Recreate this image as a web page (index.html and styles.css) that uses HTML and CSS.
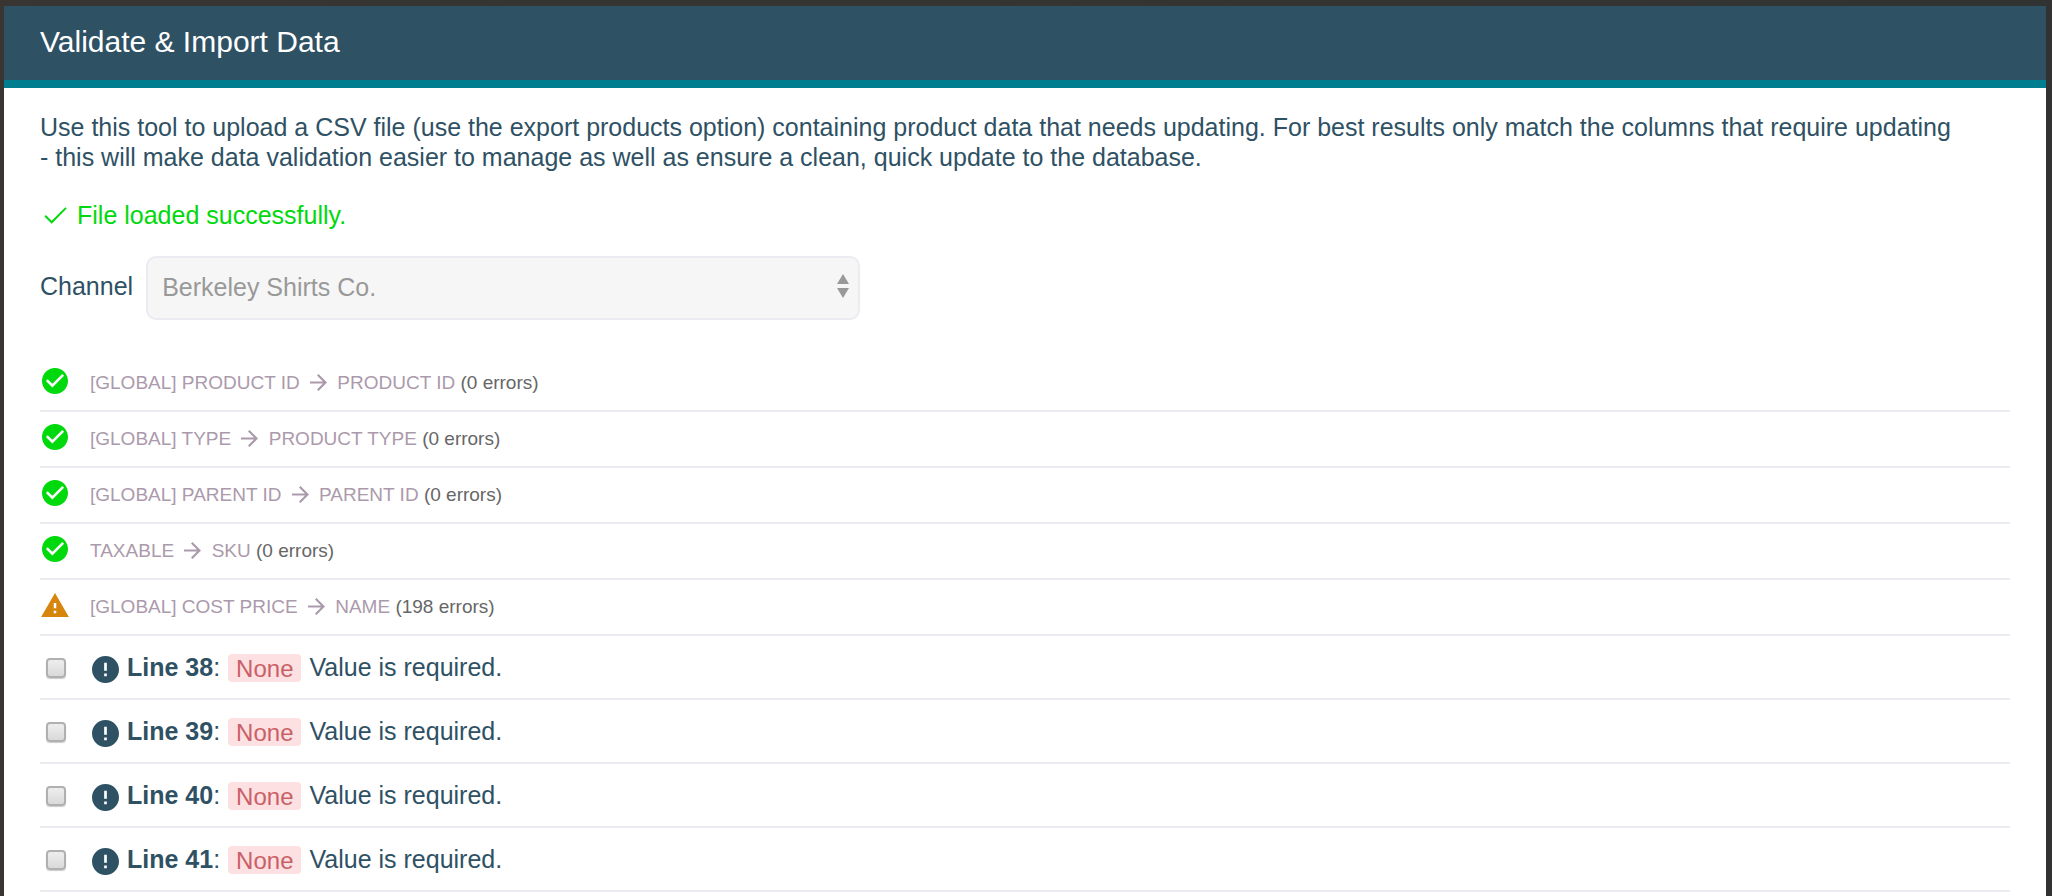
FILE: index.html
```html
<!DOCTYPE html>
<html lang="en">
<head>
  <meta charset="UTF-8" />
  <title>Validate &amp; Import Data</title>
  <link rel="stylesheet" href="styles.css">
</head>
<body>
  <!-- Shared icons -->
  <svg class="sprite" aria-hidden="true">
    <symbol id="icon-check" viewBox="3 5 18 14">
      <path d="M3.9 12.6L9 17.7 20.2 6.4" fill="none" stroke="currentColor" stroke-width="1.5" />
    </symbol>
    <symbol id="icon-ok" viewBox="2 2 20 20">
      <path d="M12 2C6.48 2 2 6.48 2 12s4.48 10 10 10 10-4.48 10-10S17.52 2 12 2zm-2 15l-5-5 1.41-1.41L10 14.17l7.59-7.59L19 8l-9 9z" />
    </symbol>
    <symbol id="icon-warning" viewBox="1 2 22 19">
      <path d="M1 21h22L12 2 1 21zm12-3h-2v-2h2v2zm0-4h-2v-4h2v4z" />
    </symbol>
    <symbol id="icon-error" viewBox="2 2 20 20">
      <path d="M12 2C6.48 2 2 6.48 2 12s4.48 10 10 10 10-4.48 10-10S17.52 2 12 2zm1 15h-2v-2h2v2zm0-4h-2V7h2v6z" />
    </symbol>
    <symbol id="icon-arrow" viewBox="4 4 16 16">
      <path d="M12 4l-1.41 1.41L16.17 11H4v2h12.17l-5.58 5.59L12 20l8-8z" />
    </symbol>
  </svg>

  <div class="modal">
    <header class="modal-header">
      <h1>Validate &amp; Import Data</h1>
    </header>

    <main class="modal-body">
      <p class="intro">Use this tool to upload a CSV file (use the export products option) containing product data that needs updating. For best results only match the columns that require updating - this will make data validation easier to manage as well as ensure a clean, quick update to the database.</p>

      <p class="success">
        <svg class="icon-check"><use href="#icon-check" /></svg>
        File loaded successfully.
      </p>

      <div class="form-group">
        <label for="channel">Channel</label>
        <div class="select">
          <select id="channel" name="channel" disabled>
            <option>Berkeley Shirts Co.</option>
          </select>
          <svg class="select-arrows" viewBox="0 0 12 24">
            <path d="M6 0l6 10H0zM0 14h12L6 24z" />
          </svg>
        </div>
      </div>

      <ul class="results">
        <li class="column">
          <span class="status ok"><svg><use href="#icon-ok" /></svg></span>
          <span class="mapping">[GLOBAL] PRODUCT ID <svg class="arrow"><use href="#icon-arrow" /></svg> PRODUCT ID <span class="count">(0 errors)</span></span>
        </li>
        <li class="column">
          <span class="status ok"><svg><use href="#icon-ok" /></svg></span>
          <span class="mapping">[GLOBAL] TYPE <svg class="arrow"><use href="#icon-arrow" /></svg> PRODUCT TYPE <span class="count">(0 errors)</span></span>
        </li>
        <li class="column">
          <span class="status ok"><svg><use href="#icon-ok" /></svg></span>
          <span class="mapping">[GLOBAL] PARENT ID <svg class="arrow"><use href="#icon-arrow" /></svg> PARENT ID <span class="count">(0 errors)</span></span>
        </li>
        <li class="column">
          <span class="status ok"><svg><use href="#icon-ok" /></svg></span>
          <span class="mapping">TAXABLE <svg class="arrow"><use href="#icon-arrow" /></svg> SKU <span class="count">(0 errors)</span></span>
        </li>
        <li class="column">
          <span class="status warning"><svg><use href="#icon-warning" /></svg></span>
          <span class="mapping">[GLOBAL] COST PRICE <svg class="arrow"><use href="#icon-arrow" /></svg> NAME <span class="count">(198 errors)</span></span>
        </li>
        <li class="line">
          <input type="checkbox" id="line38" />
          <label for="line38"><svg class="icon-error"><use href="#icon-error" /></svg><span><strong>Line 38</strong>:</span> <code class="value">None</code> <span>Value is required.</span></label>
        </li>
        <li class="line">
          <input type="checkbox" id="line39" />
          <label for="line39"><svg class="icon-error"><use href="#icon-error" /></svg><span><strong>Line 39</strong>:</span> <code class="value">None</code> <span>Value is required.</span></label>
        </li>
        <li class="line">
          <input type="checkbox" id="line40" />
          <label for="line40"><svg class="icon-error"><use href="#icon-error" /></svg><span><strong>Line 40</strong>:</span> <code class="value">None</code> <span>Value is required.</span></label>
        </li>
        <li class="line">
          <input type="checkbox" id="line41" />
          <label for="line41"><svg class="icon-error"><use href="#icon-error" /></svg><span><strong>Line 41</strong>:</span> <code class="value">None</code> <span>Value is required.</span></label>
        </li>
      </ul>
    </main>
  </div>
</body>
</html>
```
FILE: styles.css
```css
* {
  box-sizing: border-box;
}
body {
  display: flex;
  min-height: 100vh;
  margin: 0;
  padding: 6px 6px 0 4px;
  font-family: "Liberation Sans", Arial, sans-serif;
  font-size: 25px;
  line-height: 30px;
  color: #2f5164;
  background: linear-gradient(to right, #383532, #313332);
}
svg {
  display: block;
  fill: currentColor;
}
.sprite {
  position: absolute;
  width: 0;
  height: 0;
}
.modal {
  flex: 1;
  background: #fff;
}
.modal-header {
  padding: 18px 36px 20px;
  color: #fff;
  background: #2f5164;
  border-bottom: 8px solid #007d8f;
}
h1 {
  margin: 0;
  font-size: 30px;
  font-weight: normal;
  line-height: 36px;
}
.modal-body {
  padding: 24px 36px 0;
}
.intro {
  margin: 0 0 28px;
  padding-right: 50px;
}
.success {
  display: flex;
  align-items: center;
  gap: 10px;
  margin: 0 0 26px;
  padding-left: 4px;
  color: #00d90b;
}
.icon-check {
  width: 23px;
  height: 18px;
}
.form-group {
  display: flex;
  align-items: center;
  gap: 13px;
  margin-bottom: 36px;
}
.form-group label {
  padding-bottom: 4px;
}
.select {
  position: relative;
  flex: 0 1 714px;
}
.select select {
  display: block;
  width: 100%;
  height: 64px;
  padding: 0 40px 2px 14px;
  appearance: none;
  font: inherit;
  color: #999;
  opacity: 1;
  background: #f6f6f6;
  border: 2px solid #ebebf1;
  border-radius: 10px;
}
.select-arrows {
  position: absolute;
  top: 18px;
  right: 11px;
  width: 12px;
  height: 24px;
  color: #999;
  pointer-events: none;
}

/* Results list */
.results {
  margin: 0;
  padding: 0;
  list-style: none;
}
.results li {
  display: flex;
  align-items: center;
  border-bottom: 2px solid #ebebf1;
}
.column {
  height: 56px;
  gap: 20px;
}
.status {
  display: flex;
  justify-content: center;
  width: 30px;
  padding-bottom: 4px;
}
.status svg {
  width: 26px;
  height: 26px;
}
.ok {
  color: #00d90b;
}
.warning {
  color: #d6860d;
}
.warning svg {
  width: 28px;
  height: 24px;
}
.mapping {
  font-size: 19px;
  color: #ab9aab;
}
.arrow {
  display: inline-block;
  width: 17px;
  height: 17px;
  margin: 0 5px;
  vertical-align: -2px;
}
.count {
  color: #666;
}
.line {
  height: 64px;
  gap: 26px;
}
.line input {
  width: 20px;
  height: 20px;
  margin: 2px 0 0 6px;
  appearance: none;
  background: linear-gradient(#eee, #dadada);
  border: 2px solid #b0b0b0;
  border-radius: 4px;
  box-shadow: 0 1px 1px #ccc;
}
.line input:checked {
  background: #2f5164;
}
.line label {
  display: flex;
  align-items: center;
  gap: 8px;
}
.icon-error {
  width: 27px;
  height: 27px;
  margin-top: 4px;
}
.value {
  margin-top: 2px;
  padding: 1px 8px 0;
  font-family: inherit;
  font-size: 24px;
  line-height: 27px;
  color: #cb5f67;
  background: #fde0e1;
  border-radius: 4px;
}
```
